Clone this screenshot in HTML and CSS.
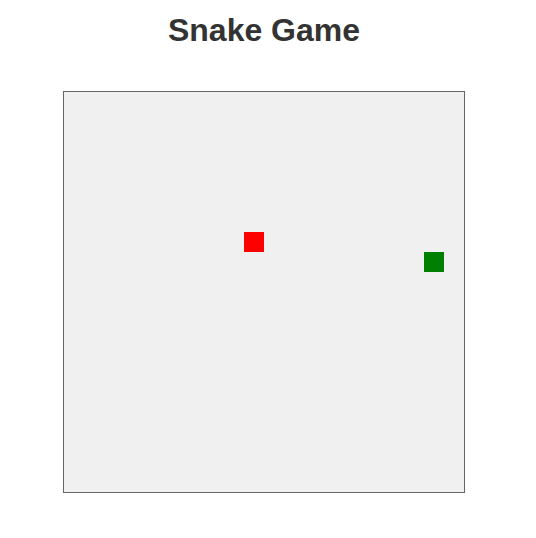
FILE: index.html
```html
<!DOCTYPE html>
<html>
<head>
<meta charset="utf-8">
<title>Snake Game</title>
<link rel="stylesheet" href="styles.css">
</head>
<body>
<main class="game">
  <h1 class="title">Snake Game</h1>
  <div class="board">
    <div class="cell food"></div>
    <div class="cell snake"></div>
  </div>
</main>
</body>
</html>
```
FILE: styles.css
```css
html, body {
  margin: 0;
  padding: 0;
  background: #ffffff;
}

.game {
  width: 528px;
  display: flex;
  flex-direction: column;
  align-items: center;
  padding-top: 12px;
  font-family: "Liberation Sans", Arial, sans-serif;
}

.title {
  margin: 0;
  font-size: 32px;
  font-weight: bold;
  line-height: 37px;
  color: #333333;
}

.board {
  margin-top: 42px;
  width: 400px;
  height: 400px;
  border: 1px solid #666666;
  background: #f0f0f0;
  display: grid;
  grid-template-columns: repeat(20, 20px);
  grid-template-rows: repeat(20, 20px);
}

.cell {
  width: 20px;
  height: 20px;
}

.food {
  grid-column: 10;
  grid-row: 8;
  background: #ff0000;
}

.snake {
  grid-column: 19;
  grid-row: 9;
  background: #008000;
}
```
